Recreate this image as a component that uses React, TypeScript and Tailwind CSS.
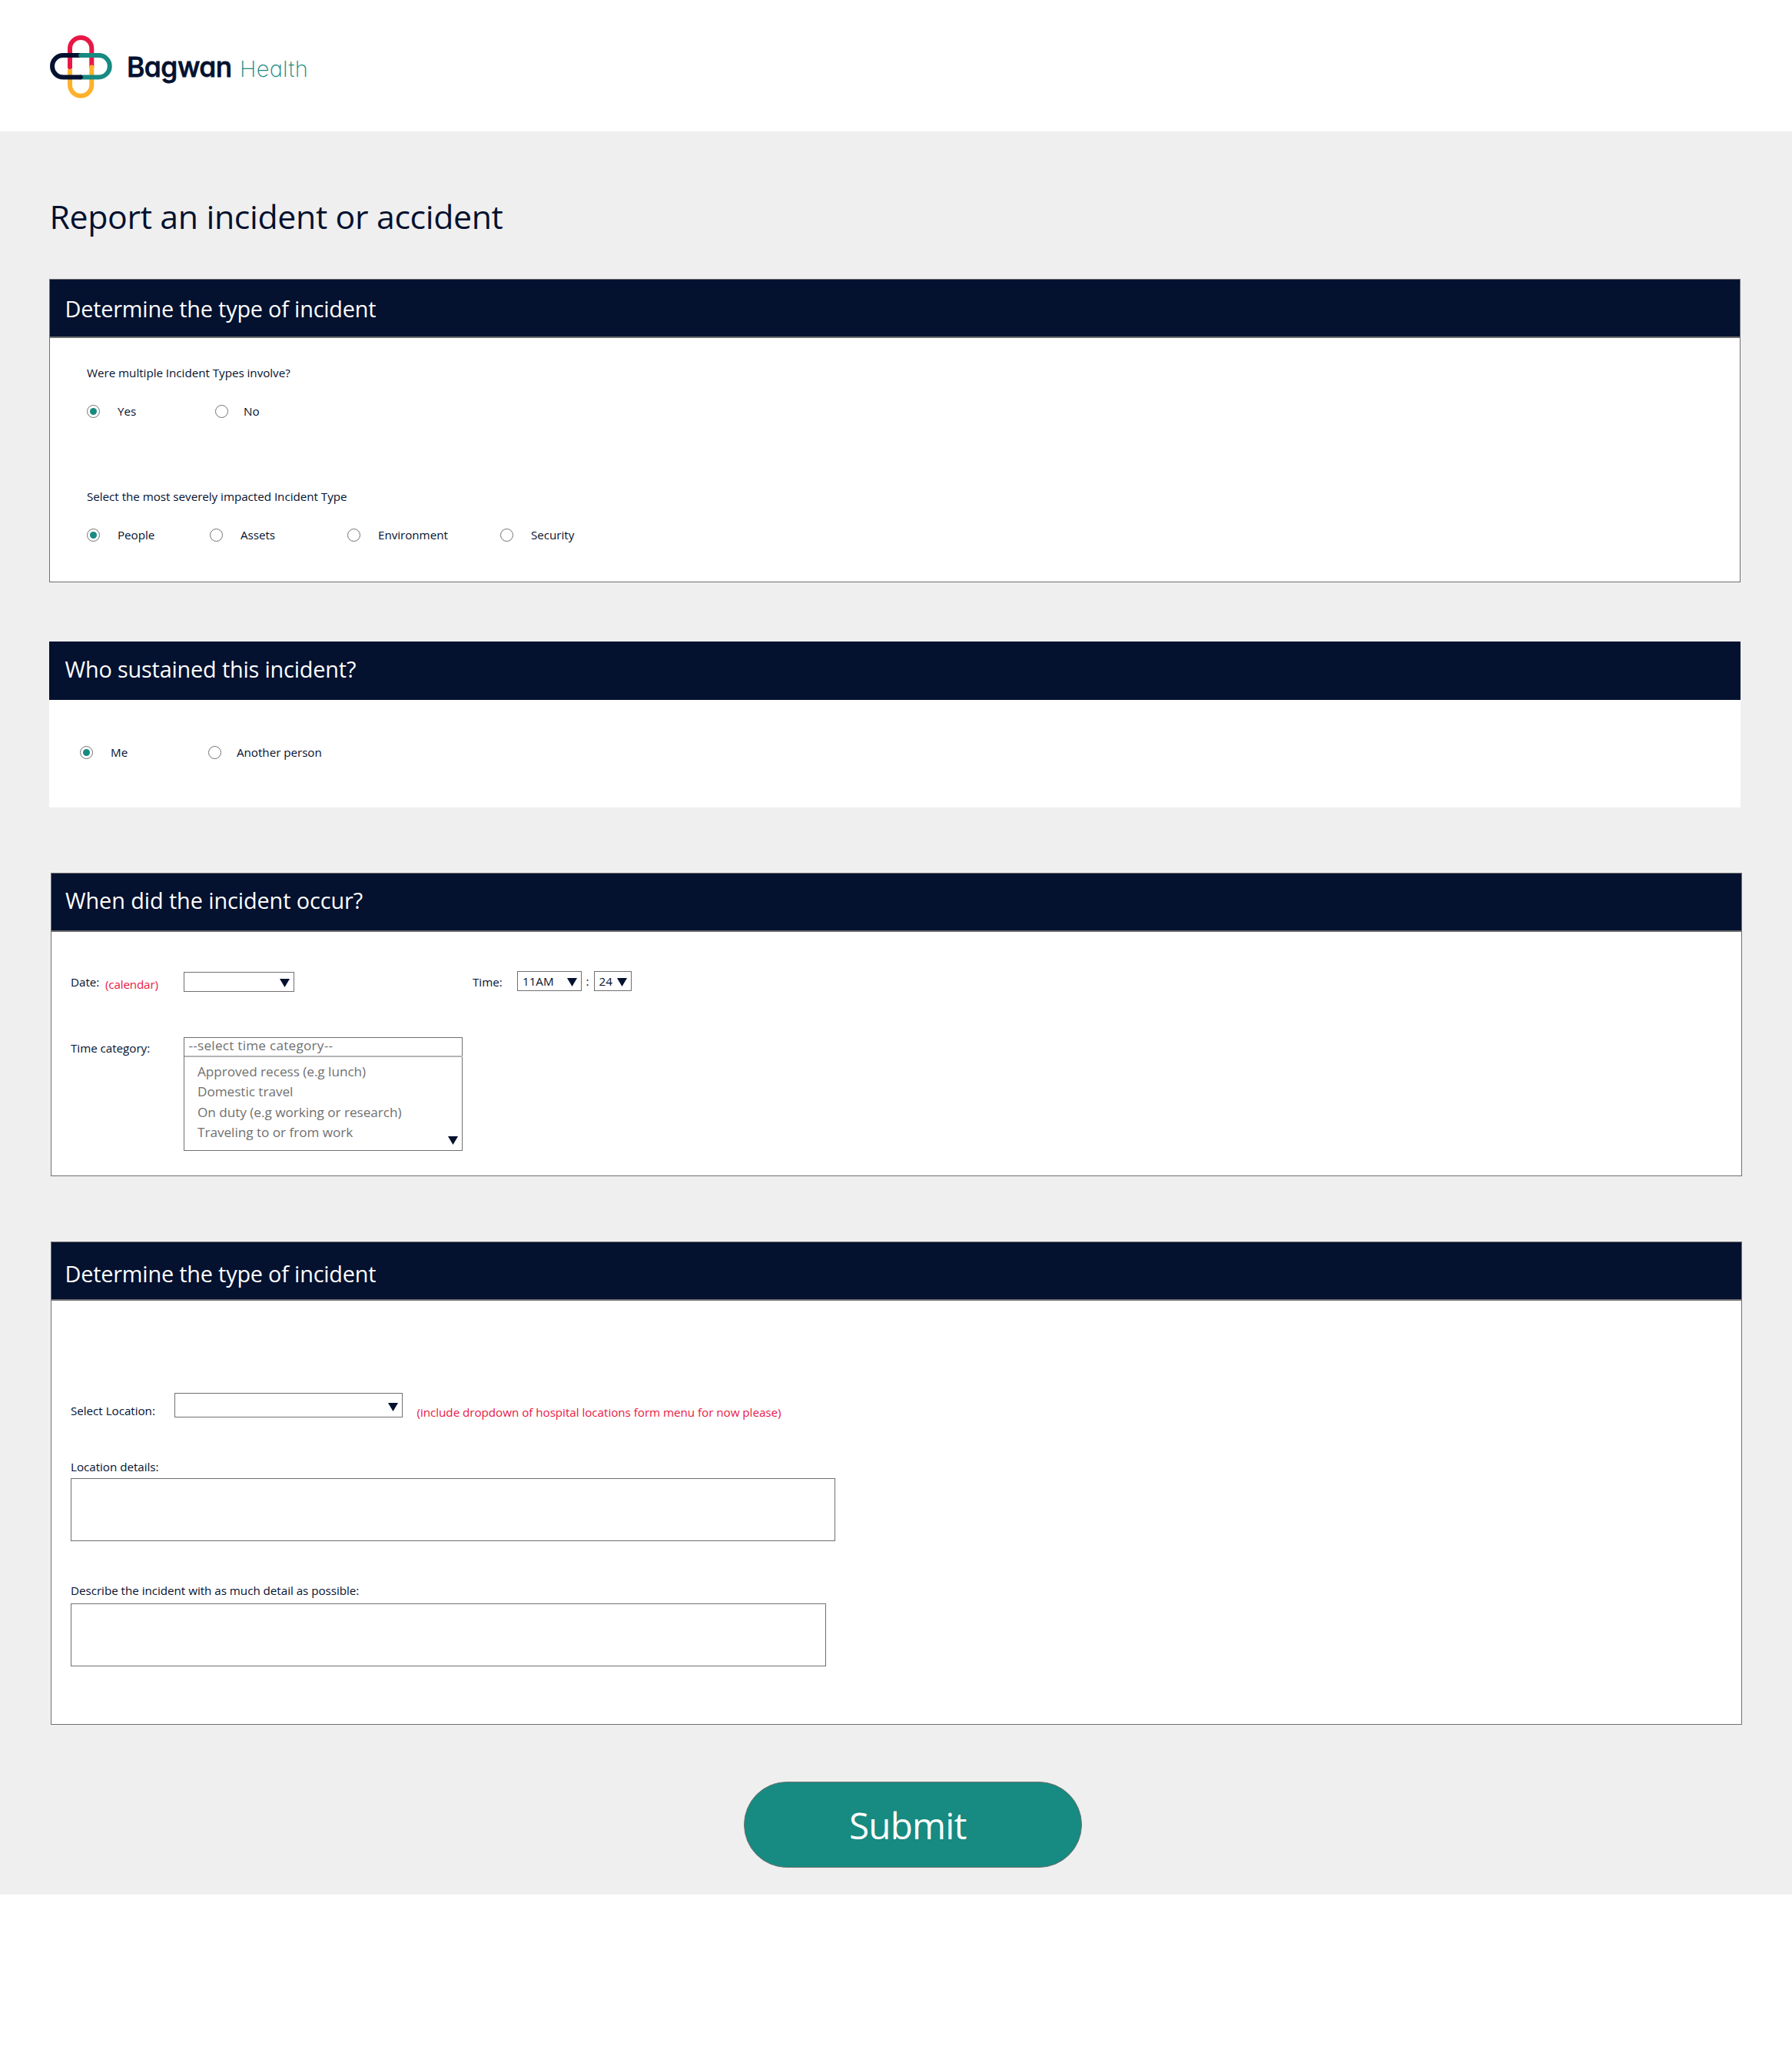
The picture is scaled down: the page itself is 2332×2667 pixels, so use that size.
import type { ReactNode } from 'react';

function Logo() {
  return (
    <svg className="h-[82px] w-[82px] shrink-0" viewBox="0 0 82 82" fill="none" strokeWidth="6" strokeLinecap="round">
      <path d="M26 41V17.2a14 14 0 0 1 28.3 0V41" stroke="#e81745" />
      <path d="M54.3 41v23.6a14 14 0 0 1-28.3 0V44" stroke="#feb12b" strokeLinecap="butt" />
      <circle cx="54.3" cy="41.6" r="3" fill="#feb12b" />
      <circle cx="26" cy="41" r="3" fill="#e81745" />
      <path d="M40 54.4H17.2a14 14 0 0 1 0-28.3H40" stroke="#04112f" />
      <path d="M40.2 26.1h23.4a14 14 0 0 1 0 28.3H42" stroke="#178a81" strokeLinecap="butt" />
      <circle cx="40" cy="26.1" r="2.9" fill="#178a81" />
      <circle cx="40" cy="54.4" r="2.9" fill="#04112f" />
    </svg>
  );
}

function Triangle({ className = '' }: { className?: string }) {
  return (
    <svg className={`h-[11px] w-[13px] shrink-0 ${className}`} viewBox="0 0 13 11">
      <path d="M0 0h13L6.5 11z" fill="#04112f" />
    </svg>
  );
}

function Label({ children, className = '' }: { children: ReactNode; className?: string }) {
  return (
    <span className={`block shrink-0 whitespace-nowrap text-[15.2px] leading-[20px] tracking-[-0.03px] ${className}`}>
      {children}
    </span>
  );
}

function Option({ label, checked, className = '', gap = 'ml-[23px]' }: { label: string; checked?: boolean; className?: string; gap?: string }) {
  return (
    <label className={`flex ${className}`}>
      <span className="mt-[2px] flex h-[17px] w-[17px] shrink-0 items-center justify-center rounded-full border border-[#707070] bg-white">
        {checked && <span className="h-[9px] w-[9px] rounded-full bg-[#178a81]" />}
      </span>
      <Label className={gap}>{label}</Label>
    </label>
  );
}

function Heading({ children, className = '' }: { children: ReactNode; className?: string }) {
  return (
    <h2 className={`h-[76px] bg-[#04112f] text-[28.8px] leading-[40px] text-white ${className}`}>
      {children}
    </h2>
  );
}

const categories = ['Approved recess (e.g lunch)', 'Domestic travel', 'On duty (e.g working or research)', 'Traveling to or from work'];

export default function App() {
  return (
    <div className="min-h-[2667px] w-[2332px] bg-white font-['Open_Sans','Noto_Sans',sans-serif] text-[#04112f]">
      <header className="flex h-[171px] items-start pl-[65px] pt-[46px]">
        <Logo />
        <div className="ml-[18px] mt-[20px] flex items-baseline font-['Inter',sans-serif] leading-[44px] [font-feature-settings:'cv11']">
          <span className="w-[147px] text-[35.6px] font-medium tracking-[-0.5px] [-webkit-text-stroke:0.8px_#04112f] [stroke-linejoin:round]">Bagwan</span>
          <span className="text-[29px] font-extralight tracking-[0.3px] text-[#178a81]">Health</span>
        </div>
      </header>

      <main className="flex h-[2295px] flex-col items-start bg-[#efefef] pl-[64px] pt-[81px]">
        <h1 className="ml-[0.5px] text-[42.8px] leading-[60px] tracking-[-0.34px]">Report an incident or accident</h1>

        <section className="mt-[51px] w-[2201px]">
          <Heading className="border border-[#707070] pl-[19.5px] pt-[18px] tracking-[-0.18px]">Determine the type of incident</Heading>
          <div className="h-[319px] border border-[#707070] bg-white pl-[48px] pt-[35px]">
            <Label>Were multiple Incident Types involve?</Label>
            <div className="mt-[30px] flex">
              <Option label="Yes" checked className="w-[167px]" />
              <Option label="No" gap="ml-[20px]" />
            </div>
            <Label className="mt-[91px]">Select the most severely impacted Incident Type</Label>
            <div className="mt-[30px] flex">
              <Option label="People" checked className="w-[160px]" />
              <Option label="Assets" className="w-[179px]" />
              <Option label="Environment" className="w-[199px]" />
              <Option label="Security" />
            </div>
          </div>
        </section>

        <section className="mt-[77px] w-[2201px]">
          <Heading className="pl-[20.5px] pt-[16px] tracking-[-0.16px]">Who sustained this incident?</Heading>
          <div className="flex h-[140px] bg-white pl-[40px] pt-[58px]">
            <Option label="Me" checked className="w-[167px]" />
            <Option label="Another person" gap="ml-[20px]" />
          </div>
        </section>

        <section className="ml-[2px] mt-[85px] w-[2201px]">
          <Heading className="border border-[#707070] pl-[18px] pt-[15px] tracking-[-0.07px]">When did the incident occur?</Heading>
          <div className="h-[319px] border border-[#707070] bg-white pl-[25px] pt-[51px]">
            <div className="flex h-[27px] items-start">
              <Label className="mt-[4px] w-[45px]">Date:</Label>
              <Label className="mt-[7px] w-[102px] tracking-[-0.15px] text-[#e81745]">(calendar)</Label>
              <div className="mt-px flex h-[26px] w-[144px] justify-end border border-[#707070] pr-[5px] pt-[8px]">
                <Triangle />
              </div>
              <Label className="ml-[232px] mt-[4px] w-[58px]">Time:</Label>
              <div className="flex h-[26px] w-[84px] items-start justify-between border border-[#707070] pl-[6px] pr-[5px]">
                <Label className="mt-[2px]">11AM</Label>
                <Triangle className="mt-[8px]" />
              </div>
              <Label className="mt-[3px] w-[16px] pl-[5.5px]">:</Label>
              <div className="flex h-[26px] w-[49px] items-start justify-between border border-[#707070] pl-[5.5px] pr-[5px]">
                <Label className="mt-[2px]">24</Label>
                <Triangle className="mt-[8px]" />
              </div>
            </div>
            <div className="mt-[59px] flex items-start">
              <Label className="mt-[4px] w-[147px]">Time category:</Label>
              <div className="relative h-[148px] w-[363px] border border-[#707070] text-[17.2px] text-[#707070]">
                <div className="h-[23px] pl-[5.5px] pt-px leading-[18px] tracking-[0.23px]">--select time category--</div>
                <div className="-mr-px h-[2px] bg-[#b4b4b4]" />
                <ul className="pl-[17px] pt-[6px] leading-[26.3px] tracking-[-0.04px]">
                  {categories.map((c) => (
                    <li key={c}>{c}</li>
                  ))}
                </ul>
                <Triangle className="absolute bottom-[7px] right-[5px]" />
              </div>
            </div>
          </div>
        </section>

        <section className="ml-[2px] mt-[85px] w-[2201px]">
          <Heading className="border border-[#707070] pl-[17.5px] pt-[21px] tracking-[-0.18px]">Determine the type of incident</Heading>
          <div className="h-[553px] border border-[#707070] bg-white pl-[25px] pt-[120px]">
            <div className="flex h-[35px] items-start">
              <Label className="mt-[13px] w-[135px]">Select Location:</Label>
              <div className="flex h-[32px] w-[297px] justify-end border border-[#707070] pr-[5px] pt-[12px]">
                <Triangle />
              </div>
              <Label className="ml-[18.5px] mt-[15px] tracking-[-0.01px] text-[#e81745]">
                (include dropdown of hospital locations form menu for now please)
              </Label>
            </div>
            <Label className="mt-[51px]">Location details:</Label>
            <div className="mt-[5px] h-[82px] w-[995px] border border-[#707070]" />
            <Label className="mt-[54px]">Describe the incident with as much detail as possible:</Label>
            <div className="mt-[7px] h-[82px] w-[983px] border border-[#707070]" />
          </div>
        </section>

        <button className="ml-[904px] mt-[74px] flex h-[112px] w-[440px] shrink-0 items-start rounded-full border border-[#707070] bg-[#178a81] pl-[136px] pt-[23.5px] text-[47.5px] leading-[64px] tracking-[-0.75px] text-white">
          Submit
        </button>
      </main>
    </div>
  );
}
